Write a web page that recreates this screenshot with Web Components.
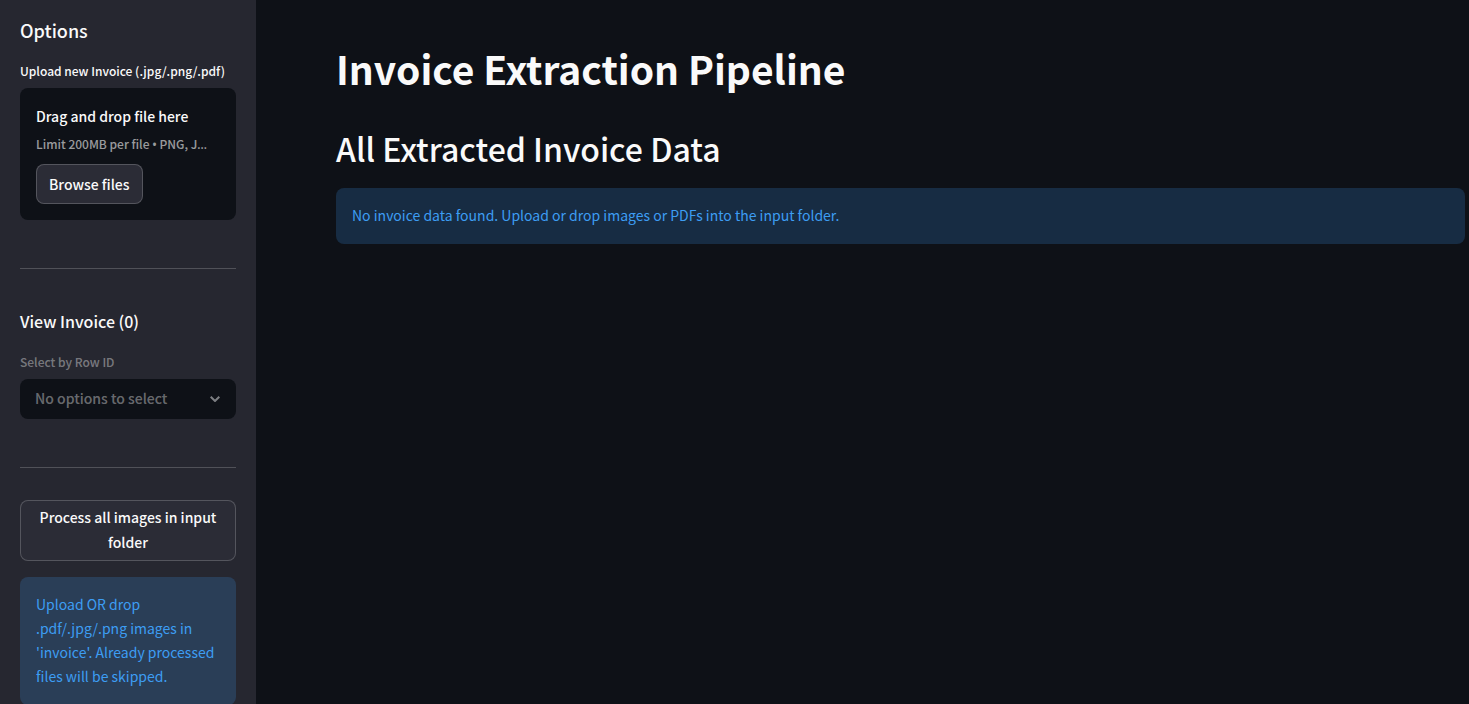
<!DOCTYPE html>
<html lang="en">
<head>
<meta charset="utf-8">
<title>Invoice Extraction Pipeline</title>
<style>
  :root {
    --page: #0e1117;
    --panel: #262730;
    --raised: #2b2c36;
    --text: #fafafa;
    --line: rgba(250, 250, 250, .2);
    --info: #3d9df3;
    --info-fill: rgba(61, 157, 243, .2);
  }
  body {
    margin: 0;
    background: var(--page);
    color: var(--text);
    font: 14px/24px "Source Sans Pro", "Noto Sans CJK SC", sans-serif;
  }
</style>
</head>
<body>
<invoice-app>
  <side-panel slot="sidebar">
    <section-title level="2">Options</section-title>
    <file-uploader label="Upload new Invoice (.jpg/.png/.pdf)"></file-uploader>
    <panel-divider></panel-divider>
    <section-title level="3">View Invoice (0)</section-title>
    <select-field label="Select by Row ID" placeholder="No options to select"></select-field>
    <panel-divider></panel-divider>
    <action-button>Process all images in input folder</action-button>
    <info-alert>Upload OR drop .pdf/.jpg/.png images in 'invoice'. Already processed files will be skipped.</info-alert>
  </side-panel>
  <page-heading></page-heading>
  <info-alert>No invoice data found. Upload or drop images or PDFs into the input folder.</info-alert>
</invoice-app>

<script>
const define = (name, render, setup) => customElements.define(name, class extends HTMLElement {
  constructor() {
    super();
    this.attachShadow({ mode: 'open' });
  }
  connectedCallback() {
    this.shadowRoot.innerHTML = render(this);
    if (setup) setup(this.shadowRoot);
  }
});

define('invoice-app', () => `
  <style>
    :host { display: grid; grid-template-columns: 256px minmax(0, 1fr); height: 100vh; overflow: hidden; }
    main { padding: 40px 4px 0 80px; overflow: auto; }
  </style>
  <slot name="sidebar"></slot>
  <main><slot></slot></main>`);

define('side-panel', () => `
  <style>
    :host { display: block; background: var(--panel); overflow: hidden; }
    aside { display: flex; flex-direction: column; padding: 18px 20px; }
  </style>
  <aside><slot></slot></aside>`);

define('page-heading', () => `
  <style>
    :host { display: block; }
    h1, h2 { margin: 0; }
    h1 { font-size: 39px; line-height: 56px; font-weight: 700; }
    h2 { padding: 30px 0 18px; font-size: 32px; line-height: 44px; font-weight: 500; }
  </style>
  <h1>Invoice Extraction Pipeline</h1>
  <h2>All Extracted Invoice Data</h2>`);

define('section-title', el => `
  <style>
    :host { display: block; margin-bottom: 18px; }
    h2, h3 { margin: 0; font-weight: 500; line-height: 24px; }
    h2 { font-size: 18px; }
    h3 { font-size: 16px; }
  </style>
  <h${el.getAttribute('level')}><slot></slot></h${el.getAttribute('level')}>`);

define('panel-divider', () => `
  <style>
    :host { display: block; padding: 48px 0 40px; }
    :host(:last-of-type) { padding-bottom: 32px; }
    hr { margin: 0; border: 0; height: 1px; background: var(--line); }
  </style>
  <hr>`);

define('action-button', () => `
  <style>
    :host { display: block; }
    button {
      width: 100%; padding: 4px 12px 5px; border: 1px solid var(--line); border-radius: 8px;
      background: var(--raised); color: inherit; font: inherit; font-weight: 500; line-height: 25px; cursor: pointer;
    }
    :host([compact]) button { width: auto; padding: 7px 12px; line-height: 24px; }
  </style>
  <button type="button"><slot></slot></button>`);

define('file-uploader', el => `
  <style>
    :host { display: block; }
    label { display: block; padding-bottom: 6px; font-size: 12px; font-weight: 500; line-height: 22px; white-space: nowrap; }
    .drop { padding: 16px; border-radius: 8px; background: var(--page); }
    .title { font-weight: 500; }
    .hint { padding: 4px 0 8px; font-size: 12px; font-weight: 500; color: rgba(250, 250, 250, .6); white-space: nowrap; }
    .mark { font-family: "Noto Sans", sans-serif; line-height: 1; }
  </style>
  <label for="file">${el.getAttribute('label')}</label>
  <div class="drop">
    <input id="file" type="file" accept=".png,.jpg,.jpeg,.pdf" hidden>
    <div class="title">Drag and drop file here</div>
    <div class="hint">Limit 200MB per file <span class="mark">•</span> PNG, J<span class="mark">…</span></div>
    <action-button compact>Browse files</action-button>
  </div>`,
  root => root.querySelector('action-button').addEventListener('click', () => root.querySelector('input').click()));

define('select-field', el => `
  <style>
    :host { display: block; }
    label { display: block; padding-bottom: 6px; font-size: 12px; font-weight: 500; line-height: 22px; color: rgba(250, 250, 250, .4); }
    .field { display: grid; align-items: center; border-radius: 8px; background: var(--page); }
    select, svg { grid-area: 1 / 1; }
    select {
      appearance: none; width: 100%; height: 40px; padding: 0 40px 2px 15px; border: 0; border-radius: 8px;
      background: none; color: rgba(250, 250, 250, .4); font: inherit; font-weight: 500; opacity: 1;
    }
    svg { justify-self: end; margin-right: 16px; pointer-events: none; }
  </style>
  <label for="row">${el.getAttribute('label')}</label>
  <div class="field">
    <select id="row" disabled><option>${el.getAttribute('placeholder')}</option></select>
    <svg width="10" height="6" viewBox="0 0 10 6" fill="none" stroke="#7d7f83" stroke-width="2" aria-hidden="true"><path d="M.7.7 5 5 9.3.7"/></svg>
  </div>`);

define('info-alert', () => `
  <style>
    :host { display: block; }
    :host-context(side-panel) { margin-top: 16px; }
    div { padding: 15px 16px 17px; border-radius: 8px; background: var(--info-fill); color: var(--info); }
  </style>
  <div role="alert"><slot></slot></div>`);
</script>
</body>
</html>
